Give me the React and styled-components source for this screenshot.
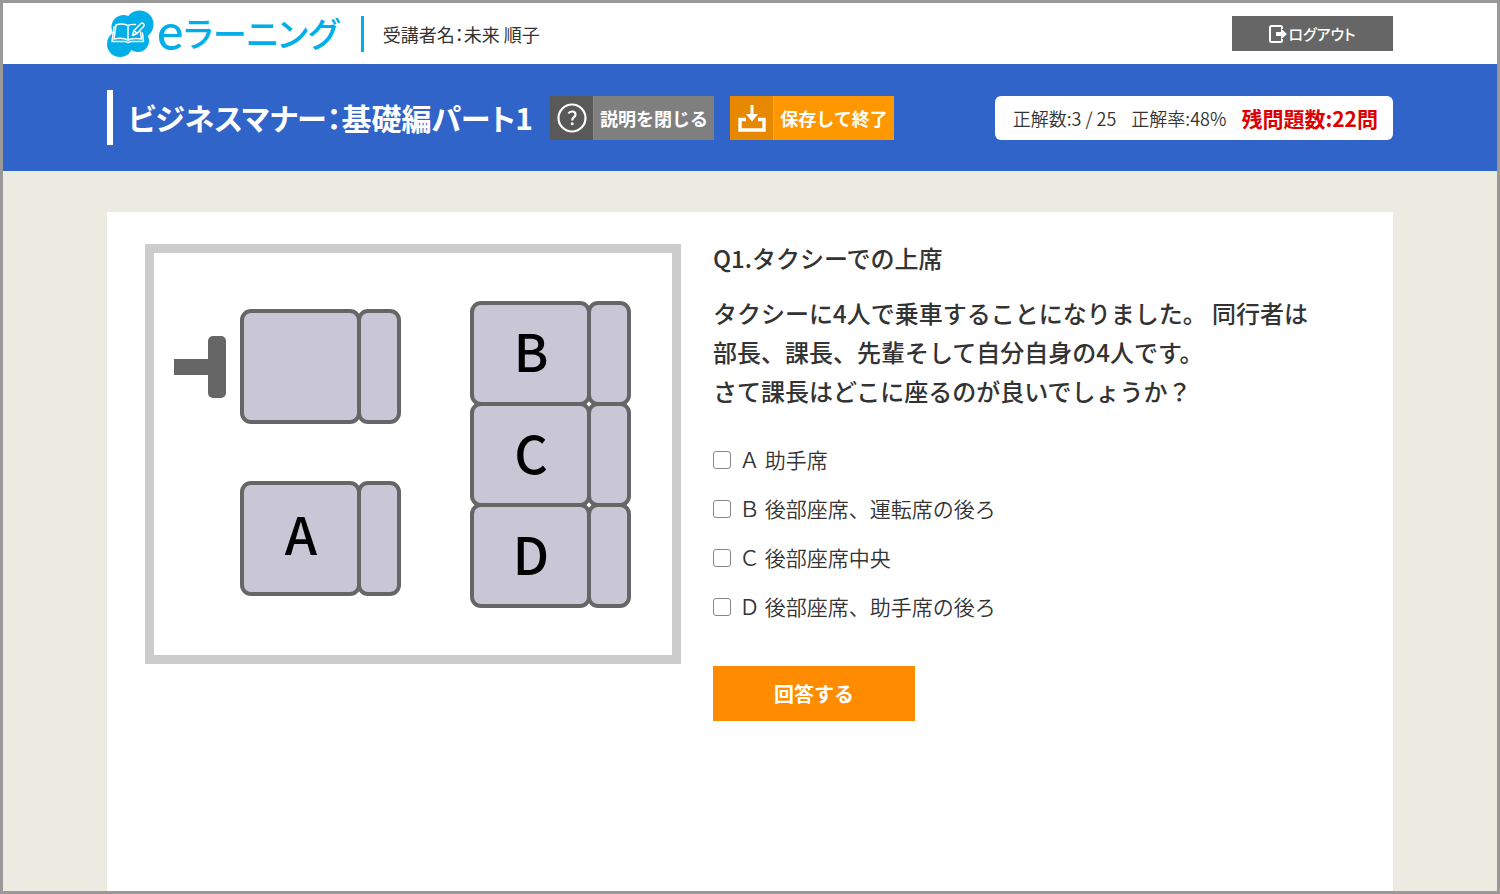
import React from 'react'
import styled, { createGlobalStyle } from 'styled-components'

const GlobalStyle = createGlobalStyle`
    * {
        box-sizing: border-box;
    }
    body {
        margin: 0;
        color: #333;
        font-family: "Noto Sans CJK JP", sans-serif;
    }
    button, input {
        font: inherit;
    }
    h1, h2, p {
        margin: 0;
    }
`

const Page = styled.div`
    display: flex;
    flex-direction: column;
    min-height: 100vh;
    border: 3px solid #999;
    background-color: #ebebe2;
`

const Container = styled.div`
    display: flex;
    align-items: center;
    width: 100%;
    max-width: 1286px;
    margin: 0 auto;
`

const Header = styled.header`
    display: flex;
    height: 61px;
    background-color: #fff;
    font-feature-settings: "palt";
`

const Logo = styled.a`
    display: flex;
    align-items: center;
    color: #00aee8;
    text-decoration: none;
`

const LogoInitial = styled.span`
    margin-left: 2px;
    padding-bottom: 6px;
    font-family: Lato, sans-serif;
    font-size: 50px;
    font-weight: 500;
    line-height: 50px;
`

const LogoText = styled.span`
    padding-bottom: 3px;
    font-size: 34px;
    font-weight: 500;
    line-height: 57px;
    white-space: nowrap;
`

const UserName = styled.p`
    margin-left: 22px;
    padding-left: 19px;
    border-left: 3px solid #00aee8;
    font-size: 18px;
    line-height: 36px;
`

const LogoutButton = styled.button`
    display: flex;
    align-items: center;
    justify-content: center;
    width: 161px;
    height: 35px;
    margin-left: auto;
    padding: 0;
    border: none;
    background-color: #666;
    color: #fff;
    font-size: 15px;
    font-weight: 500;
    font-feature-settings: "palt";
    cursor: pointer;
`

const TitleBar = styled.div`
    display: flex;
    height: 107px;
    background-color: #3164c8;
`

const Title = styled.h1`
    margin-right: 17px;
    padding-left: 15px;
    border-left: 6px solid #fff;
    color: #fff;
    font-size: 30px;
    font-weight: 700;
    font-feature-settings: "palt";
    line-height: 55px;
    white-space: nowrap;
`

const ToolButton = styled.button`
    display: flex;
    width: 164px;
    height: 44px;
    margin-right: 16px;
    padding: 0;
    border: none;
    background-color: ${props => props.$color};
    color: #fff;
    font-size: 18px;
    font-weight: 700;
    line-height: 44px;
    cursor: pointer;
`

const ToolIcon = styled.span`
    display: flex;
    align-items: center;
    justify-content: center;
    width: 44px;
    height: 44px;
    border-right: 1px solid rgba(255, 255, 255, .3);
    background-color: ${props => props.$color};
`

const ToolLabel = styled.span`
    flex: 1;
    text-align: center;
    white-space: nowrap;
`

const Score = styled.div`
    display: flex;
    align-items: center;
    gap: 15px;
    height: 44px;
    margin-left: auto;
    padding: 0 15px 0 18px;
    border-radius: 6px;
    background-color: #fff;
    font-size: 18px;
    font-weight: 350;
    line-height: 44px;
    white-space: nowrap;
`

const Remaining = styled.strong`
    color: #d00;
    font-size: 21px;
    font-weight: 700;
`

const Card = styled.main`
    display: flex;
    flex: 1;
    align-items: flex-start;
    gap: 32px;
    width: 100%;
    max-width: 1286px;
    margin: 41px auto 0;
    padding: 32px 38px;
    background-color: #fff;
`

const Figure = styled.div`
    flex: 0 0 536px;
    border: 9px solid #ccc;
    svg {
        display: block;
        width: 100%;
    }
`

const Question = styled.form`
    flex: 1;
    margin-top: -6px;
    font-size: 24px;
    font-weight: 500;
    line-height: 39px;
`

const QuestionTitle = styled.h2`
    margin-bottom: 16px;
    font-size: 24px;
    font-weight: 500;
    line-height: 39px;
`

const Options = styled.div`
    display: flex;
    flex-direction: column;
    margin-top: 25px;
`

const Option = styled.label`
    display: flex;
    align-items: center;
    gap: 8px;
    height: 49px;
    font-size: 21px;
    font-weight: 350;
    cursor: pointer;
`

const Checkbox = styled.input`
    appearance: none;
    width: 18px;
    height: 18px;
    margin: 0;
    border: 1px solid #888;
    border-radius: 3px;
    background-color: #fff;
    &:checked {
        background-color: #3164c8;
    }
`

const SubmitButton = styled.button`
    width: 202px;
    height: 55px;
    margin-top: 35px;
    padding: 0;
    border: none;
    background-color: #ff8c00;
    color: #fff;
    font-size: 20px;
    font-weight: 700;
    cursor: pointer;
`

const SeatLetter = styled.text`
    fill: #000;
    font-size: 52px;
    font-weight: 500;
    text-anchor: middle;
`

const options = [
    { id: "a", text: "Ａ 助手席" },
    { id: "b", text: "Ｂ 後部座席、運転席の後ろ" },
    { id: "c", text: "Ｃ 後部座席中央" },
    { id: "d", text: "Ｄ 後部座席、助手席の後ろ" }
]

const seats = [
    { x: 88, y: 58, height: 111 },
    { x: 88, y: 230, height: 111, letter: "A", base: 302 },
    { x: 318, y: 50, height: 101, letter: "B", base: 119 },
    { x: 318, y: 151, height: 101, letter: "C", base: 221 },
    { x: 318, y: 252, height: 101, letter: "D", base: 322 }
]

const LogoMark = () => (
    <svg width="48" height="48" viewBox="0 0 48 48" aria-hidden="true">
        <g fill="#00aee8">
            <circle cx="32.500" cy="14.500" r="14" />
            <circle cx="16.500" cy="17" r="12" />
            <circle cx="13" cy="34" r="13" />
            <circle cx="31" cy="31" r="11" />
            <circle cx="22" cy="24" r="12" />
        </g>
        <g fill="none" stroke="#fff" strokeWidth="1.500" strokeLinejoin="round" strokeLinecap="round">
            <path d="M21 15.500C18 13.500 12 13.500 9 15L7 29C12 28 17 28 21 30C25 28 29 28 34.500 29L33.500 22" />
            <path d="M8.500 17H7L5 31.500H18.500Q21 33.500 23.500 31.500H36.500L35.500 23" />
            <path d="M21 15.500V30M21 15.500Q24 14 28.500 14.500" />
            <path d="M25.500 25.500L27 20.500L34 13.500Q35.500 12.500 36.500 13.800Q37.800 15 36.500 16.500L30 23.500ZM27 20.500L30 23.500" />
        </g>
    </svg>
)

const LogoutIcon = () => (
    <svg width="19" height="18" viewBox="0 0 19 18" aria-hidden="true">
        <path d="M13 4V2.500Q13 1 11.500 1h-9Q1 1 1 2.500v13Q1 17 2.500 17h9Q13 17 13 15.500V14" fill="none" stroke="#fff" strokeWidth="2" />
        <path d="M7 7h5V3.500l6 5.500-6 5.500v-3.500H7z" fill="#fff" />
    </svg>
)

const HelpIcon = () => (
    <svg width="30" height="30" viewBox="0 0 30 30" fill="none" stroke="#fff" aria-hidden="true">
        <circle cx="15" cy="15" r="13.500" strokeWidth="2.200" />
        <path d="M11.500 10.500Q12.500 8.500 15 8.500Q18.500 8.500 18.500 11.500Q18.500 13 16.800 14.300Q15.200 15.600 15.200 17.500" strokeWidth="2.200" />
        <circle cx="15.200" cy="20.800" r="1.500" fill="#fff" stroke="none" />
    </svg>
)

const SaveIcon = () => (
    <svg width="28" height="28" viewBox="0 0 28 28" aria-hidden="true">
        <path d="M8 15.500H2v10.500h24V15.500h-6" fill="none" stroke="#fff" strokeWidth="3.400" />
        <path d="M12.500 1h3v9h4.500l-6 7.500L8 10h4.500z" fill="#fff" />
    </svg>
)

const SeatMap = () => (
    <svg viewBox="0 0 518 402" role="img" aria-label="座席図">
        <rect x="20" y="106" width="36" height="16" fill="#666" />
        <rect x="54" y="83" width="18" height="62" rx="5" fill="#666" />
        {seats.map(seat => (
            <g key={seat.x + "-" + seat.y} fill="#c9c7d6" stroke="#666" strokeWidth="4">
                <rect x={seat.x} y={seat.y} width="117" height={seat.height} rx="9" />
                <rect x={seat.x + 117} y={seat.y} width="40" height={seat.height} rx="9" />
                {seat.letter && (
                    <SeatLetter x={seat.x + 59} y={seat.base} stroke="none">{seat.letter}</SeatLetter>
                )}
            </g>
        ))}
    </svg>
)

class App extends React.Component {
    constructor(props) {
        super(props)
        this.state = {
            checked: []
        }
    }

    toggle(id) {
        const { checked } = this.state
        this.setState({
            checked: checked.includes(id) ? checked.filter(item => item !== id) : [...checked, id]
        })
    }

    render() {
        return (
            <Page>
                <GlobalStyle />
                <Header>
                    <Container>
                        <Logo href="#">
                            <LogoMark />
                            <LogoInitial>e</LogoInitial>
                            <LogoText>ラーニング</LogoText>
                        </Logo>
                        <UserName>受講者名：未来 順子</UserName>
                        <LogoutButton type="button"><LogoutIcon />ログアウト</LogoutButton>
                    </Container>
                </Header>
                <TitleBar>
                    <Container>
                        <Title>ビジネスマナー：基礎編パート1</Title>
                        <ToolButton type="button" $color="#7f7f7f">
                            <ToolIcon $color="#595959"><HelpIcon /></ToolIcon>
                            <ToolLabel>説明を閉じる</ToolLabel>
                        </ToolButton>
                        <ToolButton type="button" $color="#ff9800">
                            <ToolIcon $color="#e68900"><SaveIcon /></ToolIcon>
                            <ToolLabel>保存して終了</ToolLabel>
                        </ToolButton>
                        <Score>
                            <span>正解数:3 / 25</span>
                            <span>正解率:48%</span>
                            <Remaining>残問題数:22問</Remaining>
                        </Score>
                    </Container>
                </TitleBar>
                <Card>
                    <Figure><SeatMap /></Figure>
                    <Question onSubmit={e => e.preventDefault()}>
                        <QuestionTitle>Q1.タクシーでの上席</QuestionTitle>
                        <p>
                            タクシーに4人で乗車することになりました。 同行者は<br />
                            部長、課長、先輩そして自分自身の4人です。<br />
                            さて課長はどこに座るのが良いでしょうか？
                        </p>
                        <Options>
                            {options.map(option => (
                                <Option key={option.id} htmlFor={option.id}>
                                    <Checkbox
                                        type="checkbox"
                                        id={option.id}
                                        checked={this.state.checked.includes(option.id)}
                                        onChange={() => this.toggle(option.id)}
                                    />
                                    {option.text}
                                </Option>
                            ))}
                        </Options>
                        <SubmitButton type="submit">回答する</SubmitButton>
                    </Question>
                </Card>
            </Page>
        )
    }
}

export default App
